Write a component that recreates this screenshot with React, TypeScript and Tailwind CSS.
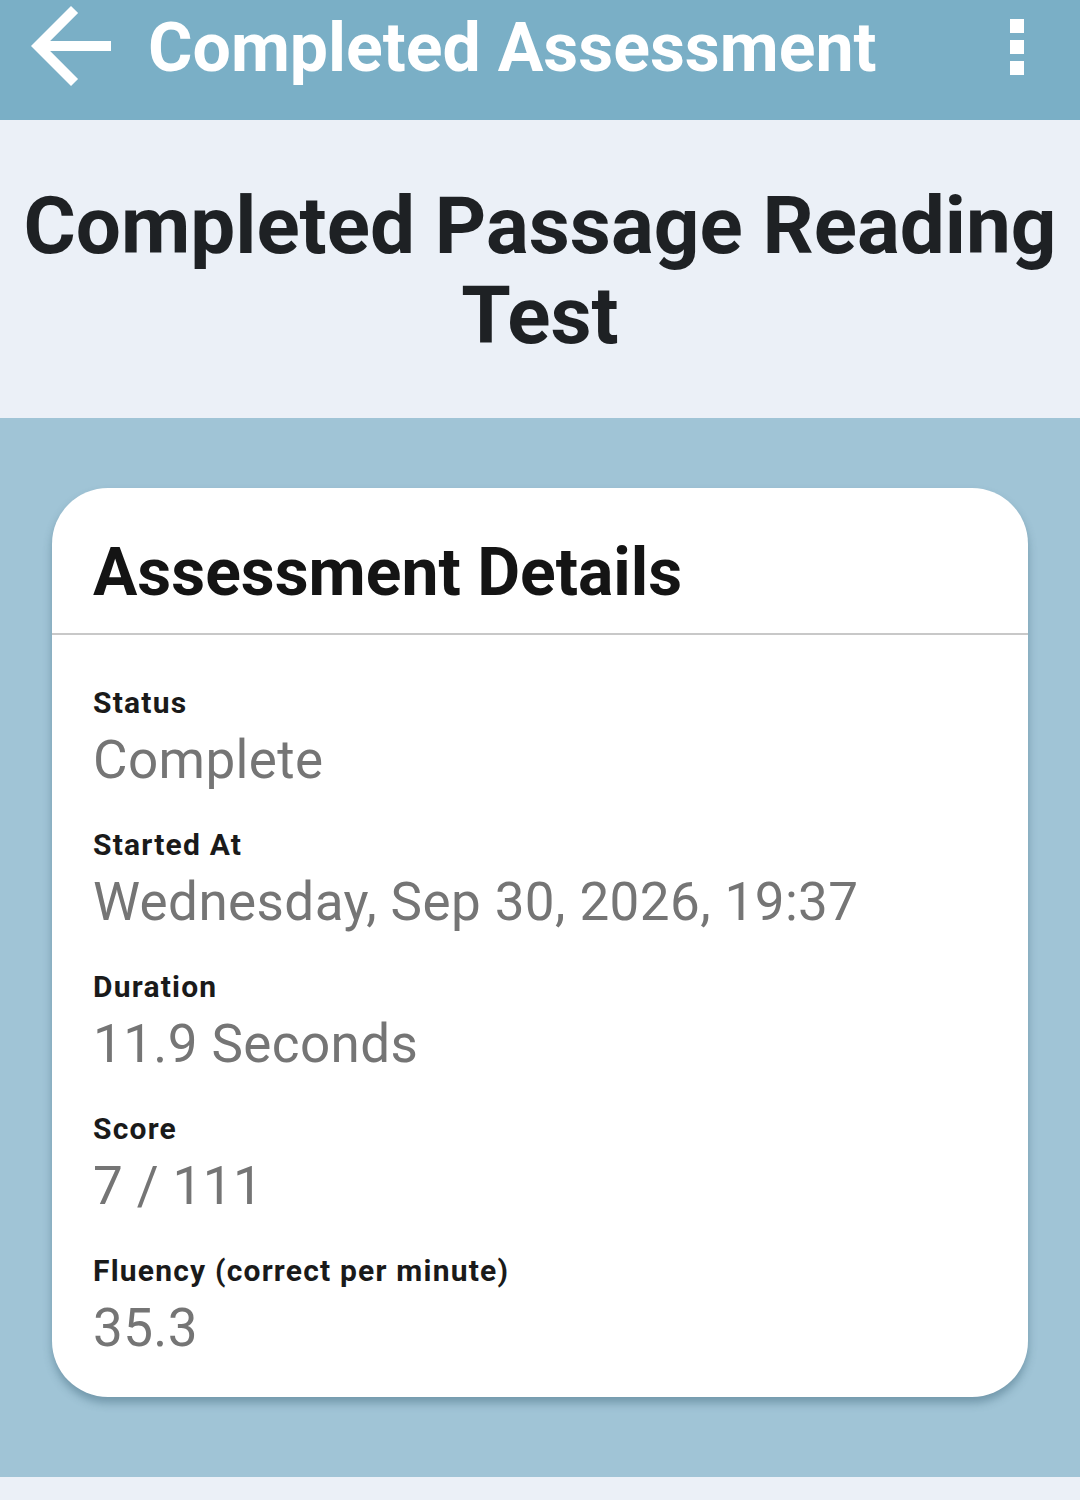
const details = [
  { label: "Status", value: "Complete" },
  { label: "Started At", value: "Wednesday, Sep 30, 2026, 19:37" },
  { label: "Duration", value: "11.9 Seconds" },
  { label: "Score", value: "7 / 111" },
  { label: "Fluency (correct per minute)", value: "35.3" },
];

function BackArrow() {
  return (
    <svg viewBox="0 0 24 24" className="h-[122px] w-[122px]" fill="white">
      <path d="M20 11H7.83l5.59-5.59L12 4l-8 8 8 8 1.41-1.41L7.83 13H20v-2z" />
    </svg>
  );
}

function MoreMenu() {
  return (
    <div className="flex flex-col gap-[7px]">
      <div className="h-[14px] w-[14px] bg-white" />
      <div className="h-[14px] w-[14px] bg-white" />
      <div className="h-[14px] w-[14px] bg-white" />
    </div>
  );
}

export default function App() {
  return (
    <div className="flex min-h-[1500px] w-[1080px] flex-col bg-[#ebf0f7] font-['Roboto',sans-serif]">
      <header className="flex h-[120px] items-start bg-[#7aafc6]">
        <div className="-mt-[14px] ml-[11px] flex h-[120px] w-[120px] items-center justify-center">
          <BackArrow />
        </div>
        <h1 className="ml-[17px] mt-[6px] flex-1 text-[68px] font-bold leading-[84px] text-white">
          Completed Assessment
        </h1>
        <div className="mr-[56px] mt-[19px]">
          <MoreMenu />
        </div>
      </header>

      <section className="flex h-[298px] items-center justify-center px-4">
        <h2 className="pt-[4px] text-center text-[80px] font-bold leading-[90px] text-[#1e2124]">
          Completed Passage Reading Test
        </h2>
      </section>

      <main className="h-[1059px] bg-[#a0c4d6] px-[52px] pt-[70px]">
        <div className="h-[909px] overflow-hidden rounded-[56px] bg-white shadow-[0_6px_8px_rgba(60,100,120,0.45)]">
          <div className="flex h-[147px] items-center border-b-2 border-[#c8c8c8] px-[41px]">
            <h3 className="pt-[24px] text-[66px] font-bold text-[#141414]">Assessment Details</h3>
          </div>
          <div className="flex flex-col gap-[28px] px-[41px] pt-[48px]">
            {details.map((d) => (
              <div key={d.label} className="flex flex-col">
                <span className="text-[30px] font-bold leading-[40px] tracking-[1.2px] text-[#1a1a1a]">
                  {d.label}
                </span>
                <span className="text-[53px] leading-[74px] tracking-[0.4px] text-[#757575]">
                  {d.value}
                </span>
              </div>
            ))}
          </div>
        </div>
      </main>

      <div className="h-[23px]" />
    </div>
  );
}
